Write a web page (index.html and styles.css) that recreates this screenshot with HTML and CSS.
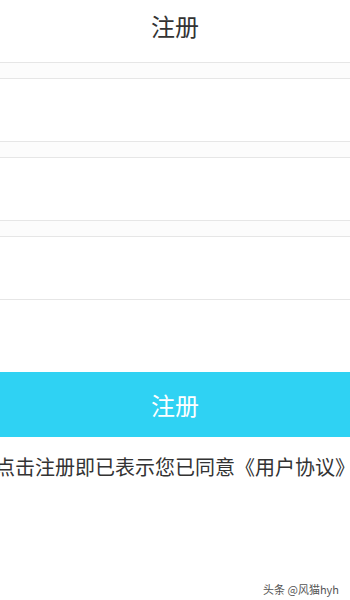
FILE: index.html
```html
<!DOCTYPE html>
<html lang="zh">
<head>
<meta charset="utf-8">
<title>注册</title>
<link rel="stylesheet" href="styles.css">
</head>
<body>
<div class="page">
  <header class="header"><h1 class="title">注册</h1></header>
  <div class="form">
    <div class="gap"></div>
    <div class="field"></div>
    <div class="gap"></div>
    <div class="field"></div>
    <div class="gap"></div>
    <div class="field last"></div>
  </div>
  <button class="submit" type="button">注册</button>
  <p class="agree">点击注册即已表示您已同意《用户协议》</p>
  <div class="watermark">头条 @风猫hyh</div>
</div>
</body>
</html>
```
FILE: styles.css
```css
html, body {
  margin: 0;
  padding: 0;
  background: #ffffff;
}
body {
  font-family: "Noto Sans CJK SC", "Noto Sans", sans-serif;
  color: #333333;
}
.page {
  position: relative;
  width: 350px;
  height: 600px;
  overflow: hidden;
}
.header {
  height: 62px;
  display: flex;
  justify-content: center;
}
.title {
  margin: 0;
  padding-top: 10px;
  font-size: 24px;
  line-height: 32px;
  font-weight: 400;
  color: #333333;
}
.form {
  display: flex;
  flex-direction: column;
}
.gap {
  height: 15px;
  background: #fcfcfc;
  border-top: 1px solid #e6e6e6;
  border-bottom: 1px solid #e6e6e6;
}
.field {
  height: 62px;
  background: #ffffff;
}
.field.last {
  border-bottom: 1px solid #e6e6e6;
}
.submit {
  display: block;
  width: 100%;
  height: 65px;
  margin: 72px 0 0;
  padding: 0;
  border: 0;
  background: #2fd2f3;
  color: #ffffff;
  font-family: "Noto Sans CJK SC", "Noto Sans", sans-serif;
  font-size: 24px;
  font-weight: 400;
}
.agree {
  margin: 16px -10px 0;
  text-align: center;
  white-space: nowrap;
  font-size: 20px;
  line-height: 28px;
  color: #333333;
}
.watermark {
  position: absolute;
  right: 11px;
  bottom: 4px;
  font-size: 11px;
  line-height: 14px;
  color: #555555;
}
```
